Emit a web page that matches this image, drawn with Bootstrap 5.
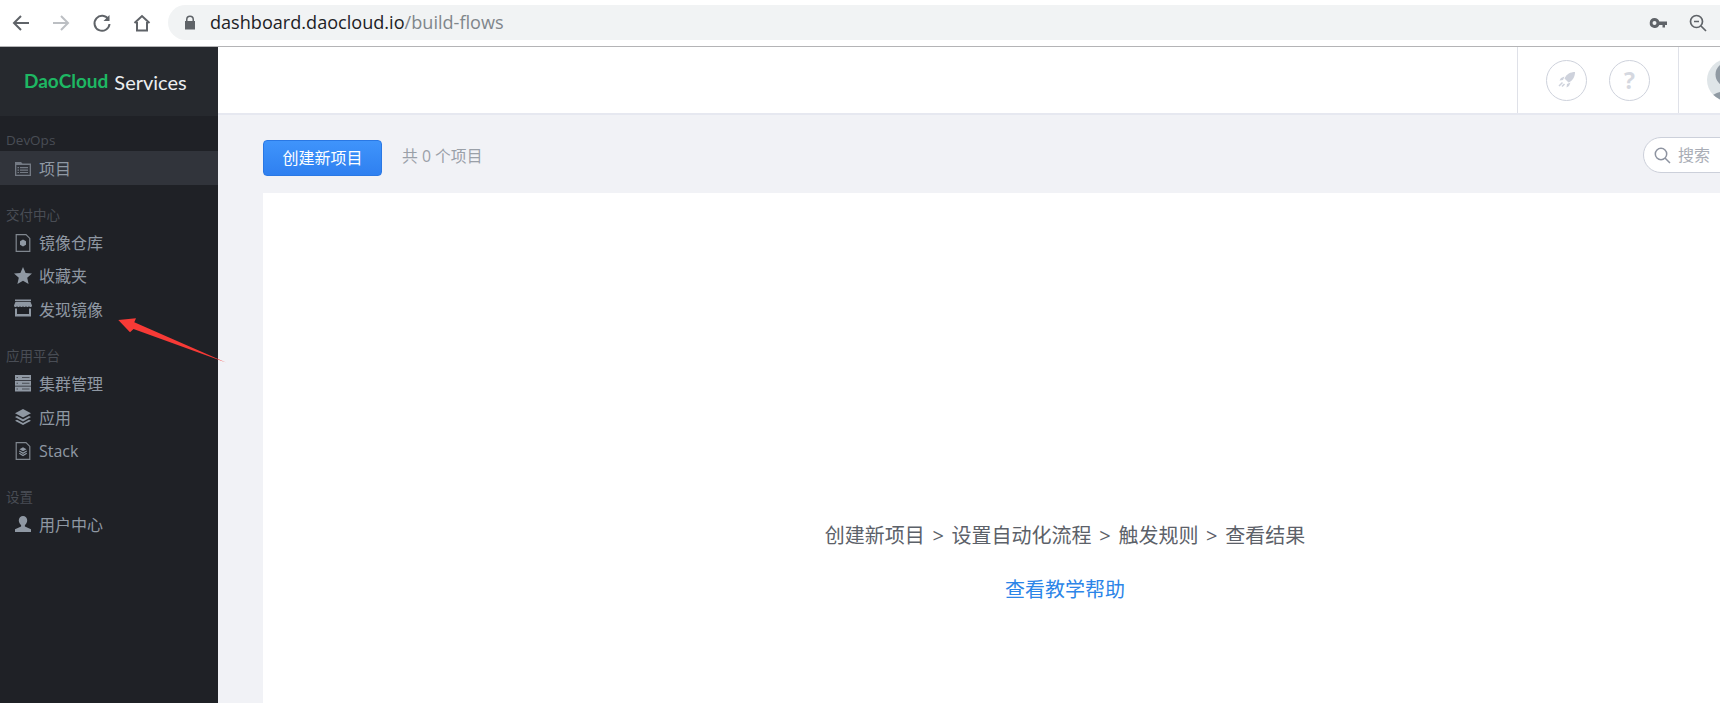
<!DOCTYPE html>
<html lang="zh"><head><meta charset="utf-8"><title>DaoCloud</title>
<link href="https://cdn.jsdelivr.net/npm/bootstrap@5.3.0/dist/css/bootstrap.min.css" rel="stylesheet">
<style>
html,body{height:100%;overflow:hidden}
body{font-family:"Open Sans","Noto Sans CJK SC",sans-serif;background:#f1f2f6;color:#5c6169;position:relative}
.chrome-bar{height:47px;background:#fff;border-bottom:1px solid #b4b4b6;padding:0 0 1px 12px}
.chrome-btn{width:40px;height:36px;flex:none}
.url-box{background:#f1f3f4;border-radius:18px 0 0 18px;height:35px;margin-left:-4px;padding:0 13px 0 16px;font-size:18.100px;color:#202124}
.url-box .path{color:#80868b}
.url-text{margin-left:14px}
.key-gap{margin-left:22px}
.shell{height:656px;overflow:hidden}
.side{width:218px;background:#1f2126;color:#8f98a3;font-size:16px;flex:none}
.brand{height:69px;background:#26292e;font-family:Lato,sans-serif;font-size:20px;padding-left:24px;color:#eceef0;font-weight:400}
.brand b{color:#1eb763;font-weight:700;margin-right:6px;font-size:19px}
.side-nav{padding-top:14px}
.sec-title{font-size:13.500px;color:#494d55;padding-left:6px;height:21px;line-height:20px}
.side-item{height:33.600px;padding:1px 0 0 14px;gap:7px;color:#8f98a3}
.side-item.on{background:#31343b;height:34px}
.side-item svg{width:18px;height:18px;flex:none;overflow:visible}
.grp{margin-bottom:19.500px}
.main-col{width:1694px;flex:none}
.top{height:68px;background:#fff;border-bottom:2px solid #e6e8f0;flex:none}
.top-cell{border-left:1px solid #dfe1e8;height:100%}
.top-tools{width:161px;padding-left:28px;gap:22px}
.top-user{width:234px;padding-left:28px}
.round{width:41px;height:41px;border:1px solid #ced2dc;border-radius:50%;flex:none}
.question-mark{color:#d5d8e0;font-size:23px;font-weight:700}
.avatar{width:42px;height:42px;border-radius:50%;flex:none}
.content{padding:25px 0 0 45px}
.wide{width:1604px}
.new-btn{width:119px;height:36px;background:linear-gradient(#3f94fb,#2f80f0);border:1px solid #2a78e4;color:#fff;font-size:16px;padding:0;border-radius:4px}
.count{font-size:15.800px;color:#9aa0a8;margin-left:20px;padding-bottom:3px}
.search-pill{width:224px;height:36px;background:#fff;border:1px solid #ccd0da;border-radius:18px;padding-left:10px;gap:7px;color:#a9adb6;font-size:16px;margin-left:auto;margin-top:-6px}
.panel{background:#fff;height:530px;margin-top:17px;padding-top:330px}
.steps{font-size:20px;color:#5c6169;line-height:26px;word-spacing:2.500px}
.help{font-size:20px;color:#2c85e8;text-decoration:none;margin-top:28px;line-height:26px}
.arrow-note{position:absolute;left:110px;top:310px;width:120px;height:60px;pointer-events:none}
</style></head>
<body>
<div class="chrome-bar d-flex align-items-center">
  <div class="chrome-btn d-flex align-items-center"><svg width="20" height="20" viewBox="0 0 20 20" fill="none" stroke="#5f6368" stroke-width="2"><path d="M17 10H2M9 3l-7 7 7 7"/></svg></div>
  <div class="chrome-btn d-flex align-items-center"><svg width="20" height="20" viewBox="0 0 20 20" fill="none" stroke="#bcbfc3" stroke-width="2"><path d="M1 10h15M9 3l7 7-7 7"/></svg></div>
  <div class="chrome-btn d-flex align-items-center"><svg width="20" height="20" viewBox="0 0 20 20" fill="none" stroke="#5f6368" stroke-width="2"><path d="M16.500 6.500A7.500 7.500 0 1 0 17.500 11"/><path d="M17.500 2v6h-6" fill="#5f6368" stroke="none"/></svg></div>
  <div class="chrome-btn d-flex align-items-center"><svg width="20" height="20" viewBox="0 0 20 20" fill="none" stroke="#5f6368" stroke-width="2"><path d="M2.500 10 10 3l7.500 7M5 9v8.500h10V9"/></svg></div>
  <div class="url-box flex-grow-1 d-flex align-items-center">
    <svg width="12" height="15" viewBox="0 0 12 15"><path fill="#5f6368" d="M2 6V4.500a4 4 0 0 1 8 0V6h1v8.500H1V6zm1.500 0h5V4.500a2.500 2.500 0 0 0-5 0z"/></svg>
    <span class="url-text">dashboard.daocloud.io<span class="path">/build-flows</span></span>
    <svg class="ms-auto" width="18" height="12" viewBox="0 0 18 12"><path fill="#5f6368" fill-rule="evenodd" d="M5.500 1a5 5 0 0 1 4.800 3.500H18V8h-2v2.500h-2.500V8h-3.200A5 5 0 1 1 5.500 1zm0 3a2 2 0 1 0 0 4 2 2 0 0 0 0-4z"/></svg>
    <svg class="key-gap" width="18" height="18" viewBox="0 0 18 18" fill="none" stroke="#5f6368" stroke-width="1.700"><circle cx="7.500" cy="7.500" r="6"/><path d="M12 12l5 5M5 7.500h5"/></svg>
  </div>
</div>
<div class="shell d-flex">
  <aside class="side">
    <div class="brand d-flex align-items-center"><b>DaoCloud</b> Services</div>
    <div class="side-nav">
    <div class="grp">
      <div class="sec-title">DevOps</div>
      <div class="side-item on d-flex align-items-center"><svg viewBox="0 0 18 18"><path fill="#747a84" fill-rule="evenodd" d="M1 2h6l1.500 1.500H17V16H1zM2.300 5v9.700h13.400V5z"/><path fill="#747a84" d="M6 7h8v1.300H6zM6 9.500h8v1.300H6zM6 12h8v1H6zM3.500 7h1.500v1.300H3.500zM3.500 9.500h1.500v1.300H3.500zM3.500 12h1.500v1H3.500z"/></svg>项目</div>
    </div>
    <div class="grp">
      <div class="sec-title">交付中心</div>
      <div class="side-item d-flex align-items-center"><svg viewBox="0 0 18 18"><path fill="none" stroke="#80878f" stroke-width="1.200" d="M2.200.600h9.800l3.800 3.800v13h-13.600z"/><path fill="#8f98a3" d="M9 5.500l3 1.750v3.500L9 12.500l-3-1.750v-3.500z"/></svg>镜像仓库</div>
      <div class="side-item d-flex align-items-center"><svg viewBox="0 0 18 18"><path fill="#8f98a3" d="M9 0l2.600 6 6.400.600-4.800 4.200 1.400 6.200L9 13.800 3.400 17l1.400-6.200L0 6.600 6.400 6z"/></svg>收藏夹</div>
      <div class="side-item d-flex align-items-center"><svg viewBox="0 0 18 18" fill="#8f98a3"><path d="M1 -1.500h16V0H1zM1.500 .800h15L18 4.500c0 2-3 2-3 .300 0 1.700-3 1.700-3 0 0 1.700-3 1.700-3 0 0 1.700-3 1.700-3 0 0 1.700-3 1.700-3 0 0 1.700-3 1.700-3-.300zM1 7.500h2V13h12V7.500h2v8H1z"/></svg>发现镜像</div>
    </div>
    <div class="grp">
      <div class="sec-title">应用平台</div>
      <div class="side-item d-flex align-items-center"><svg viewBox="0 0 18 18" fill="#8f98a3"><path d="M1 0h16v5H1zM1 5.800h16v5H1zM1 11.600h16v4.800H1z"/><path fill="#4a4e56" d="M2.500 2h1.500v1H2.500zM2.500 7.800h1.500v1H2.500zM2.500 13.500h1.500v1H2.500zM8 2h7.500v1H8zM8 7.800h7.500v1H8zM8 13.500h7.500v1H8z"/></svg>集群管理</div>
      <div class="side-item d-flex align-items-center"><svg viewBox="0 0 18 18" fill="#8f98a3"><path d="M9 0l8 4.300-8 4.300-8-4.300z"/><path d="M3 7L9 10.200 15 7l2 1.100-8 4.300-8-4.300z"/><path d="M3 10.700L9 14l6-3.300 2 1.100-8 4.300-8-4.300z"/></svg>应用</div>
      <div class="side-item d-flex align-items-center"><svg viewBox="0 0 18 18"><path fill="none" stroke="#80878f" stroke-width="1.200" d="M2.200.600h9.800l3.800 3.800v13h-13.600z"/><path fill="#8f98a3" d="M9 5.300l3.500 2L9 9.300l-3.500-2zM5.500 8.600l3.500 2 3.500-2 .500 1L9 12l-4-2.400zM5.500 10.800l3.500 2 3.500-2 .500 1L9 14.200l-4-2.400z"/></svg>Stack</div>
    </div>
    <div class="grp">
      <div class="sec-title">设置</div>
      <div class="side-item d-flex align-items-center"><svg viewBox="0 0 18 18"><path fill="#8f98a3" d="M9 0a4.200 4.200 0 0 1 4.200 4.300c0 2-1 4-2.300 4.700v1.500l6.100 2.800V16H1v-2.700l6.100-2.800V9C5.800 8.300 4.800 6.300 4.800 4.300A4.200 4.200 0 0 1 9 0z"/></svg>用户中心</div>
    </div>
    </div>
  </aside>
  <div class="main-col d-flex flex-column">
    <header class="top d-flex justify-content-end align-items-stretch">
      <div class="top-cell top-tools d-flex align-items-center">
        <div class="round d-flex align-items-center justify-content-center"><svg width="18" height="18" viewBox="0 0 18 18" fill="#ced2dc"><path d="M17 1c-4.500 0-8.500 2-10.500 6.500l4 4C15 9.500 17 5.500 17 1z"/><path d="M6.500 5.500 3 7l-1.500 2.500 3.500-.500zM12.500 11.500l-1.500 3.500-2.500 1.500.500-3.500z"/><path d="M4.500 11.500 1 15M6.500 13 4 15.500" fill="none" stroke="#ced2dc" stroke-width="1.500"/></svg></div>
        <div class="round d-flex align-items-center justify-content-center question-mark">?</div>
      </div>
      <div class="top-cell top-user d-flex align-items-center">
        <div class="avatar overflow-hidden"><svg width="42" height="42" viewBox="0 0 42 42"><rect width="42" height="42" fill="#dfe5e8"/><circle cx="21" cy="15.500" r="12.500" fill="#909aa3"/><ellipse cx="21" cy="44" rx="20" ry="12" fill="#909aa3"/></svg></div>
      </div>
    </header>
    <main class="content flex-grow-1">
      <div class="wide">
      <div class="d-flex align-items-center">
        <button class="btn new-btn">创建新项目</button>
        <span class="count">共 0 个项目</span>
        <div class="search-pill d-flex align-items-center"><svg width="17" height="17" viewBox="0 0 17 17" fill="none" stroke="#8d93a0" stroke-width="1.500"><circle cx="7" cy="7" r="5.700"/><path d="M11 11l5 5"/></svg>搜索</div>
      </div>
      <section class="panel text-center d-flex flex-column align-items-center">
        <div class="steps">创建新项目 &gt; 设置自动化流程 &gt; 触发规则 &gt; 查看结果</div>
        <a class="help" href="#">查看教学帮助</a>
      </section>
      </div>
    </main>
  </div>
</div>
<svg class="arrow-note" viewBox="110 310 120 60"><path fill="#f73a36" d="M118.300 320 136 318.300 134.300 322.300 226 362.500 133.500 329 130 332.300z"/></svg>
</body></html>
